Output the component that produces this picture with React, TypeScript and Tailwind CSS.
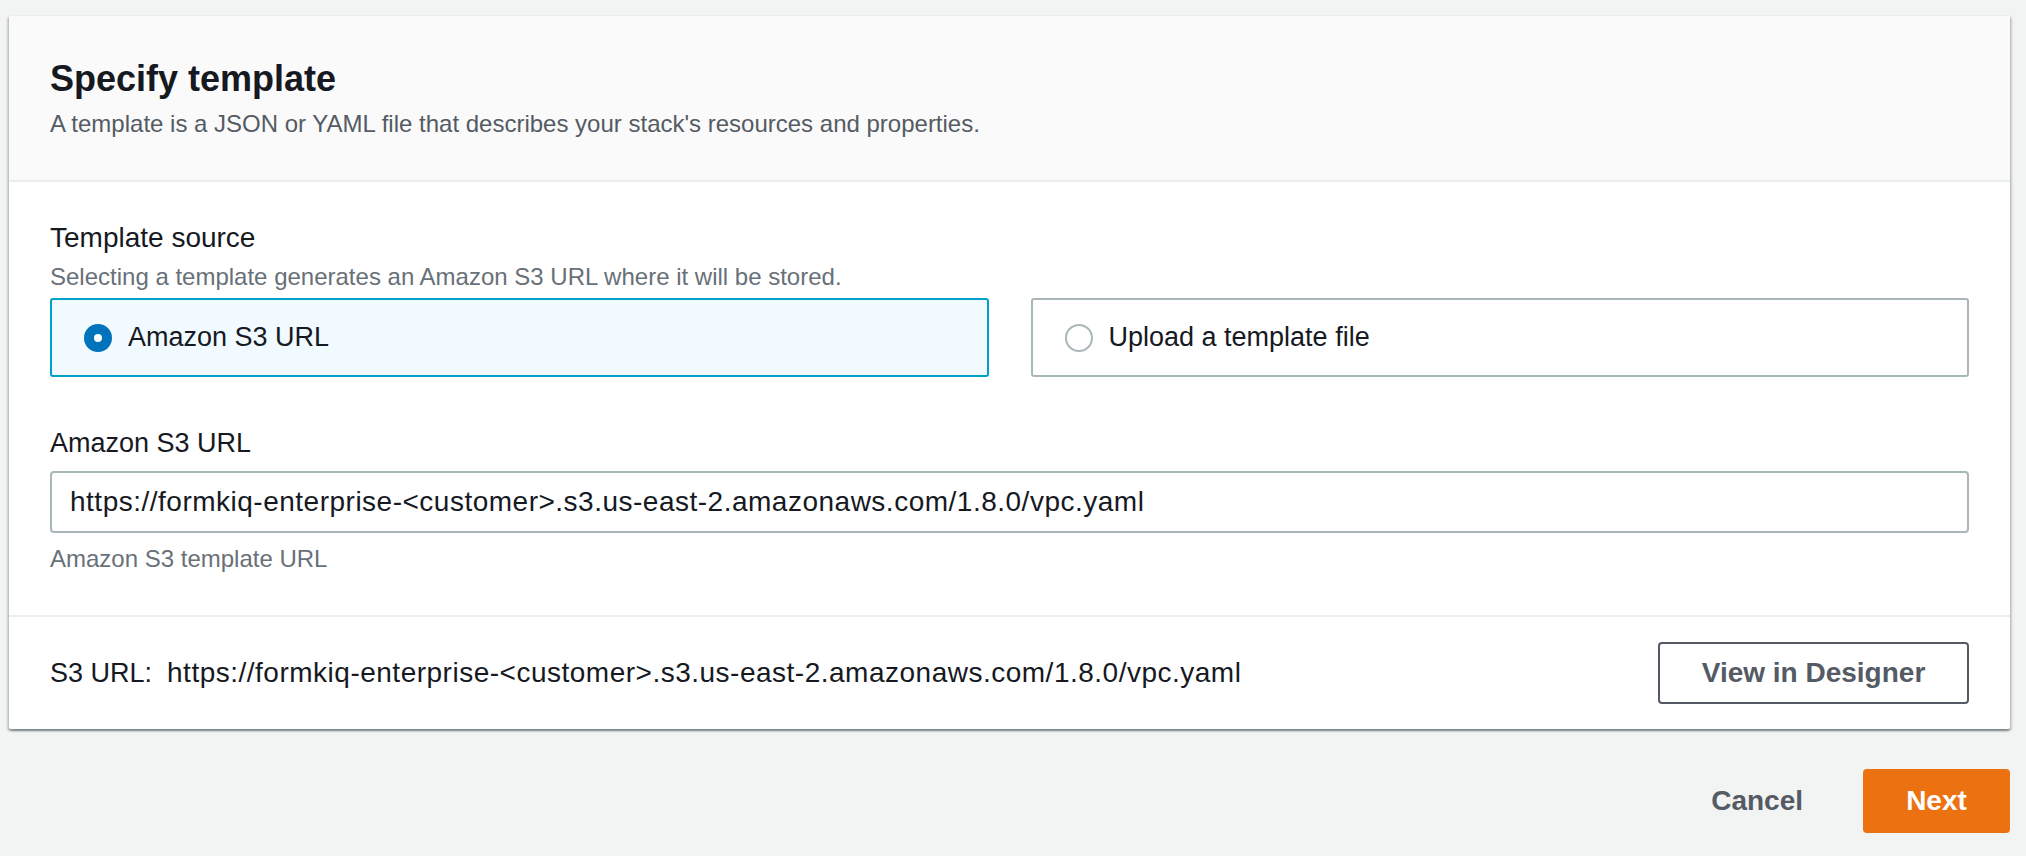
const S3_URL =
	"https://formkiq-enterprise-<customer>.s3.us-east-2.amazonaws.com/1.8.0/vpc.yaml";

export default function App() {
	return (
		<div className="min-h-[856px] bg-[#f2f3f3] pl-[9px] pr-[16px] pt-[15px] font-['Liberation_Sans',Arial,sans-serif] text-[#16191f]">
			<div className="bg-white rounded-[2px] shadow-[0_2px_2px_0_rgba(0,28,36,0.3),2px_2px_2px_0_rgba(0,28,36,0.15),-2px_2px_2px_0_rgba(0,28,36,0.15)]">
				<_header />
				<_templateSource />
				<_footerRow />
			</div>
			<div className="flex justify-end items-center gap-[20px] mt-[40px]">
				<button className="h-[64px] px-[40px] text-[28px] font-bold text-[#545b64]">Cancel</button>
				<button className="h-[64px] w-[147px] rounded-[4px] bg-[#ec7211] text-[28px] font-bold text-white">
					Next
				</button>
			</div>
		</div>
	);
}

//
function _header() {
	return (
		<div className="bg-[#fafafa] border-t border-[#eaeded] border-b-2 border-b-[#eaeded] px-[41px] pt-[41px] pb-[40px] rounded-t-[2px]">
			<h2 className="text-[36px] leading-[44px] font-bold">Specify template</h2>
			<p className="mt-[7px] text-[24px] leading-[32px] text-[#545b64]">
				A template is a JSON or YAML file that describes your stack's resources and properties.
			</p>
		</div>
	);
}

//
function _templateSource() {
	return (
		<div className="px-[41px] pt-[38px] pb-[40px] border-b-2 border-[#eaeded]">
			<div className="text-[28px] leading-[36px]">Template source</div>
			<div className="mt-[5px] text-[24px] leading-[32px] text-[#687078]">
				Selecting a template generates an Amazon S3 URL where it will be stored.
			</div>
			<div className="grid grid-cols-2 gap-[42px] mt-[5px]">
				<_tile label="Amazon S3 URL" selected />
				<_tile label="Upload a template file" />
			</div>

			<div className="mt-[48px] text-[27px] leading-[36px]">Amazon S3 URL</div>
			<input
				type="text"
				readOnly
				value={S3_URL}
				className="mt-[10px] w-full h-[62px] border-2 border-[#aab7b8] rounded-[4px] px-[18px] text-[28px] tracking-[0.5px] text-[#16191f] bg-white focus:outline-none"
			/>
			<div className="mt-[10px] text-[24px] leading-[32px] text-[#687078]">Amazon S3 template URL</div>
		</div>
	);
}

//
function _tile({ label, selected }: { label: string; selected?: boolean }) {
	return (
		<div
			className={
				selected
					? "h-[79px] flex items-center gap-[16px] pl-[32px] border-2 border-[#00a1c9] bg-[#f1faff] rounded-[3px]"
					: "h-[79px] flex items-center gap-[16px] pl-[32px] border-2 border-[#aab7b8] bg-white rounded-[3px]"
			}
		>
			{selected ? (
				<div className="w-[28px] h-[28px] rounded-full border-[10px] border-[#0073bb] bg-white shrink-0" />
			) : (
				<div className="w-[28px] h-[28px] rounded-full border-2 border-[#aab7b8] bg-white shrink-0" />
			)}
			<span className="text-[27px]">{label}</span>
		</div>
	);
}

//
function _footerRow() {
	return (
		<div className="flex items-center justify-between px-[41px] py-[25px]">
			<div className="text-[27px] leading-[36px]">
				<span>S3 URL:</span>
				<span className="ml-[15px] text-[28px] tracking-[0.5px]">{S3_URL}</span>
			</div>
			<button className="h-[62px] w-[311px] border-2 border-[#545b64] rounded-[4px] text-[28px] font-bold text-[#545b64]">
				View in Designer
			</button>
		</div>
	);
}
